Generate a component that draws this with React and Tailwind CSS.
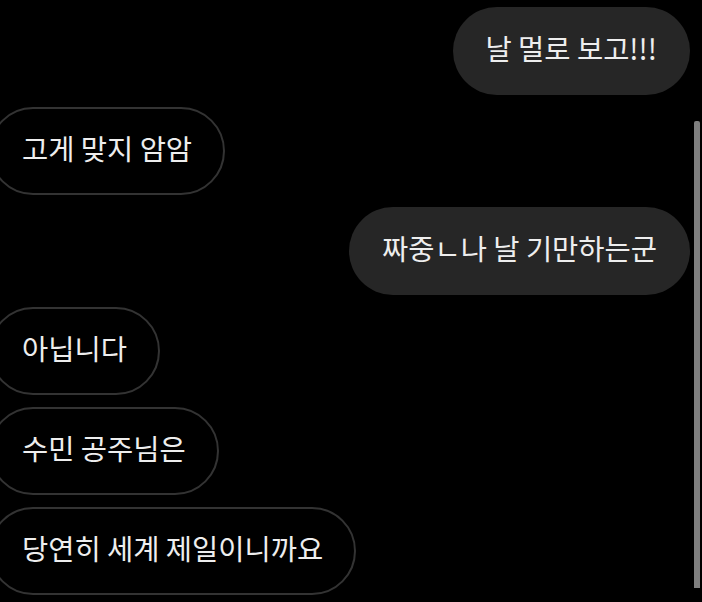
import React from 'react';

const messages = [
  { side: 'right', text: '날 멀로 보고!!!' },
  { side: 'left', text: '고게 맞지 암암' },
  { side: 'right', text: '짜중ㄴ나 날 기만하는군' },
  { side: 'left', text: '아닙니다' },
  { side: 'left', text: '수민 공주님은' },
  { side: 'left', text: '당연히 세계 제일이니까요' },
];

const Bubble = ({ side, text }) => {
  if (side === 'right') {
    return (
      <div className="self-end mr-[12px] h-[88px] flex items-center px-[33px] pb-[5px] rounded-full bg-[#262626]">
        <span>{text}</span>
      </div>
    );
  }
  return (
    <div className="self-start ml-[-11px] h-[88px] flex items-center px-[31px] pb-[5px] rounded-full border-2 border-[#333333]">
      <span>{text}</span>
    </div>
  );
};

export default function App() {
  return (
    <div
      className="relative w-[702px] h-[602px] overflow-hidden bg-black text-[#eeeeee] text-[28.5px] font-normal leading-none"
      style={{ fontFamily: '"Noto Sans CJK KR", "Noto Sans", sans-serif' }}
    >
      <div className="flex flex-col gap-[12px] pt-[7px]">
        {messages.map((m, i) => (
          <Bubble key={i} side={m.side} text={m.text} />
        ))}
      </div>

      {/* scrollbar */}
      <div className="absolute left-[694px] top-[121px] w-[6px] h-[467px] rounded-t-[2px] bg-[#7f7f7f]" />
    </div>
  );
}
